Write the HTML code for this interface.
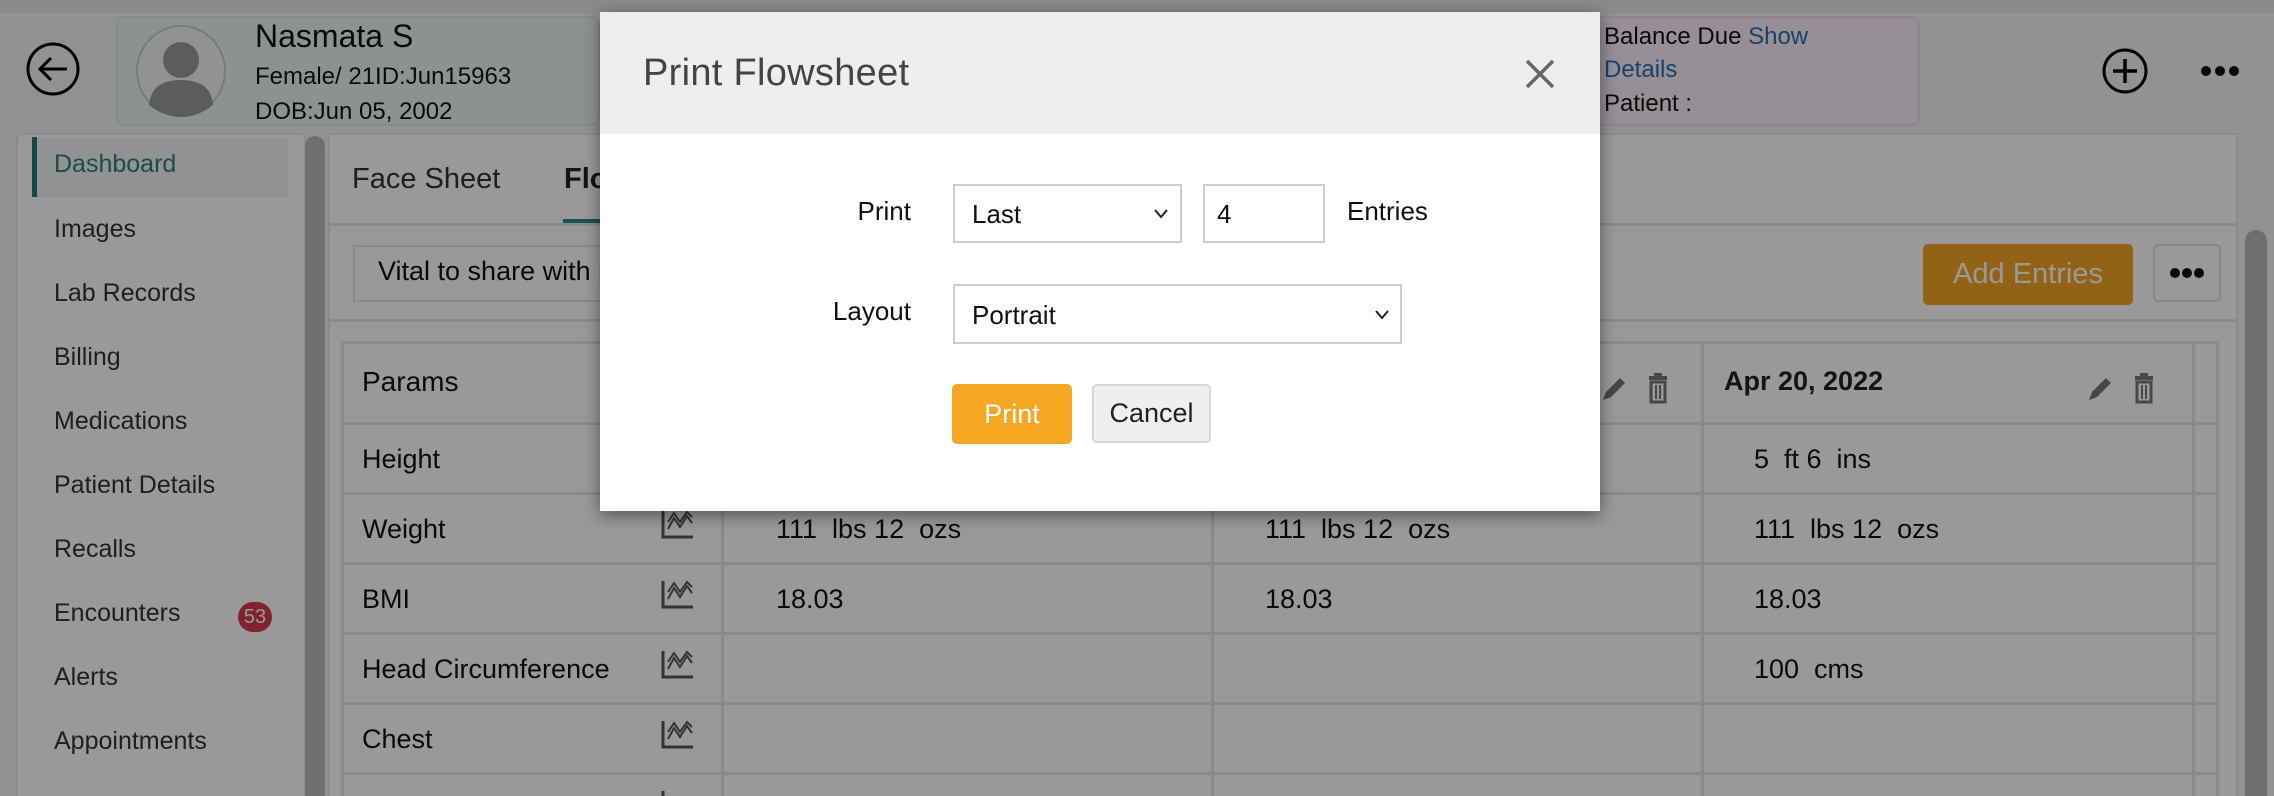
<!DOCTYPE html>
<html style="width:2274px;height:796px;overflow:hidden"><head><meta charset="utf-8"><style>
*{box-sizing:border-box;margin:0;padding:0}
body{width:2274px;height:796px;overflow:hidden;position:relative;background:#f3f3f3;font-family:"Liberation Sans",sans-serif;color:#222}
.a{position:absolute}
.t{position:absolute;white-space:nowrap}
.menu{position:absolute;left:54px;font-size:25px;color:#333}
.cell{position:absolute;font-size:27px;color:#111}
.hl{position:absolute;height:3px;background:#e6e6e6}
.vl{position:absolute;width:3px;background:#e6e6e6}
</style></head><body>
<div class="a" style="left:0;top:0;width:2274px;height:13px;background:#e8e8e8"></div>
<svg class="a" style="left:25px;top:41px" width="56" height="56" viewBox="0 0 56 56"><circle cx="28" cy="28" r="25" fill="none" stroke="#000" stroke-width="3"/><path d="M42 28H15M26 17L15 28L26 39" fill="none" stroke="#000" stroke-width="3"/></svg>
<div class="a" style="left:116px;top:16px;width:484px;height:110px;background:#eaf6ee;border:2px solid #dde8e0;border-radius:8px"></div>
<svg class="a" style="left:136px;top:25px" width="90" height="92" viewBox="0 0 90 92"><ellipse cx="45" cy="46" rx="44" ry="45" fill="#f4f4f4" stroke="#ccc" stroke-width="2"/><circle cx="45" cy="35" r="18" fill="#999"/><path d="M13 80Q15 55 45 55Q75 55 77 80Q62 92 45 92Q28 92 13 80Z" fill="#999"/></svg>
<div class="t" style="left:255px;top:18px;font-size:32px;color:#111">Nasmata S</div>
<div class="t" style="left:255px;top:63px;font-size:24px;color:#111">Female/ 21ID:Jun15963</div>
<div class="t" style="left:255px;top:98px;font-size:24px;color:#111">DOB:Jun 05, 2002</div>
<div class="a" style="left:1590px;top:16px;width:330px;height:110px;background:#fbeefb;border:2px solid #f0dcf0;border-radius:8px"></div>
<div class="t" style="left:1604px;top:23px;font-size:24px;color:#111">Balance Due <span style="color:#2a6fb0">Show</span></div>
<div class="t" style="left:1604px;top:56px;font-size:24px;color:#2a6fb0">Details</div>
<div class="t" style="left:1604px;top:90px;font-size:24px;color:#111">Patient :</div>
<svg class="a" style="left:2101px;top:47px" width="48" height="48" viewBox="0 0 48 48"><circle cx="24" cy="24" r="21" fill="none" stroke="#000" stroke-width="3"/><path d="M24 12V36M12 24H36" stroke="#000" stroke-width="3.5"/></svg>
<svg class="a" style="left:2198px;top:63px" width="44" height="16"><circle cx="8" cy="8" r="5" fill="#111"/><circle cx="22" cy="8" r="5" fill="#111"/><circle cx="36" cy="8" r="5" fill="#111"/></svg>
<div class="a" style="left:16px;top:133px;width:290px;height:663px;background:#fff;border:2px solid #e8e8e8;border-bottom:none;border-radius:6px 6px 0 0"></div>
<div class="a" style="left:32px;top:137px;width:256px;height:60px;background:#f3f3f3;border-left:5px solid #1f7a7a"></div>
<div class="menu" style="top:150px;color:#2a7f80">Dashboard</div>
<div class="menu" style="top:215px">Images</div>
<div class="menu" style="top:279px">Lab Records</div>
<div class="menu" style="top:343px">Billing</div>
<div class="menu" style="top:407px">Medications</div>
<div class="menu" style="top:471px">Patient Details</div>
<div class="menu" style="top:535px">Recalls</div>
<div class="menu" style="top:599px">Encounters</div>
<div class="a" style="left:238px;top:602px;width:34px;height:30px;border-radius:15px;background:#d8394a;color:#fff;font-size:20px;text-align:center;line-height:30px">53</div>
<div class="menu" style="top:663px">Alerts</div>
<div class="menu" style="top:727px">Appointments</div>
<div class="a" style="left:305px;top:136px;width:20px;height:660px;background:#b9b9b9;border-radius:10px 10px 0 0"></div>
<div class="a" style="left:328px;top:133px;width:1910px;height:663px;background:#fff;border:2px solid #e8e8e8;border-bottom:none"></div>
<div class="t" style="left:352px;top:163px;font-size:29px;color:#333">Face Sheet</div>
<div class="t" style="left:564px;top:163px;font-size:29px;color:#222;font-weight:bold">Flowsheet</div>
<div class="a" style="left:563px;top:219px;width:120px;height:4px;background:#2a8a8a"></div>
<div class="hl" style="left:330px;top:223px;width:1906px"></div>
<div class="a" style="left:353px;top:245px;width:400px;height:57px;border:2px solid #e6e6e6;background:#fff"></div>
<div class="t" style="left:378px;top:256px;font-size:27px;color:#111">Vital to share with patient</div>
<div class="hl" style="left:330px;top:319px;width:1906px"></div>
<div class="a" style="left:1923px;top:244px;width:210px;height:61px;background:#f5a623;border-radius:5px;color:#fff;font-size:29px;text-align:center;line-height:61px">Add Entries</div>
<div class="a" style="left:2153px;top:244px;width:68px;height:58px;border:2px solid #e2e2e2;border-radius:5px;background:#fff"></div>
<svg class="a" style="left:2167px;top:265px" width="40" height="16"><circle cx="8" cy="8" r="5" fill="#111"/><circle cx="20" cy="8" r="5" fill="#111"/><circle cx="32" cy="8" r="5" fill="#111"/></svg>
<div class="a" style="left:2245px;top:230px;width:22px;height:566px;background:#b7b7b7;border-radius:11px 11px 0 0"></div>
<div class="a" style="left:341px;top:341px;width:1878px;height:455px;border:3px solid #e6e6e6;border-bottom:none;background:#fff"></div>
<div class="hl" style="left:341px;top:422px;width:1878px"></div>
<div class="hl" style="left:341px;top:492px;width:1878px"></div>
<div class="hl" style="left:341px;top:562px;width:1878px"></div>
<div class="hl" style="left:341px;top:632px;width:1878px"></div>
<div class="hl" style="left:341px;top:702px;width:1878px"></div>
<div class="hl" style="left:341px;top:772px;width:1878px"></div>
<div class="vl" style="left:721px;top:341px;height:455px"></div>
<div class="vl" style="left:1211px;top:341px;height:455px"></div>
<div class="vl" style="left:1701px;top:341px;height:455px"></div>
<div class="vl" style="left:2192px;top:341px;height:455px"></div>
<div class="cell" style="left:362px;top:366px;font-size:28px">Params</div>
<div class="cell" style="left:1724px;top:366px;font-weight:bold;font-size:27px;color:#222">Apr 20, 2022</div>
<svg class="a" style="left:1600px;top:370px" width="70" height="36" viewBox="0 0 70 36"><path d="M3 30L6 22L20 8L25 13L11 27Z" fill="#777"/><rect x="49" y="6" width="18" height="4" fill="#777"/><rect x="54" y="3" width="8" height="3" fill="#777"/><path d="M51 12H65V32H51Z" fill="none" stroke="#777" stroke-width="3"/><path d="M56 15V29M60 15V29" stroke="#777" stroke-width="2"/></svg>
<svg class="a" style="left:2086px;top:370px" width="70" height="36" viewBox="0 0 70 36"><path d="M3 30L6 22L20 8L25 13L11 27Z" fill="#777"/><rect x="49" y="6" width="18" height="4" fill="#777"/><rect x="54" y="3" width="8" height="3" fill="#777"/><path d="M51 12H65V32H51Z" fill="none" stroke="#777" stroke-width="3"/><path d="M56 15V29M60 15V29" stroke="#777" stroke-width="2"/></svg>
<div class="cell" style="left:362px;top:444px">Height</div>
<div class="cell" style="left:362px;top:514px">Weight</div>
<div class="cell" style="left:362px;top:584px">BMI</div>
<div class="cell" style="left:362px;top:654px">Head Circumference</div>
<div class="cell" style="left:362px;top:724px">Chest</div>
<div class="cell" style="left:776px;top:514px">111&nbsp; lbs 12&nbsp; ozs</div>
<div class="cell" style="left:1265px;top:514px">111&nbsp; lbs 12&nbsp; ozs</div>
<div class="cell" style="left:1754px;top:514px">111&nbsp; lbs 12&nbsp; ozs</div>
<div class="cell" style="left:776px;top:584px">18.03</div>
<div class="cell" style="left:1265px;top:584px">18.03</div>
<div class="cell" style="left:1754px;top:584px">18.03</div>
<div class="cell" style="left:1754px;top:444px">5&nbsp; ft 6&nbsp; ins</div>
<div class="cell" style="left:1754px;top:654px">100&nbsp; cms</div>
<svg class="a" style="left:661px;top:509px" width="34" height="30" viewBox="0 0 34 30"><path d="M2 2V28H32" fill="none" stroke="#555" stroke-width="3"/><path d="M7 20L13 9L19 18L26 7L31 14M7 13L13 4L19 13L26 3L31 8" fill="none" stroke="#555" stroke-width="2"/></svg>
<svg class="a" style="left:661px;top:579px" width="34" height="30" viewBox="0 0 34 30"><path d="M2 2V28H32" fill="none" stroke="#555" stroke-width="3"/><path d="M7 20L13 9L19 18L26 7L31 14M7 13L13 4L19 13L26 3L31 8" fill="none" stroke="#555" stroke-width="2"/></svg>
<svg class="a" style="left:661px;top:649px" width="34" height="30" viewBox="0 0 34 30"><path d="M2 2V28H32" fill="none" stroke="#555" stroke-width="3"/><path d="M7 20L13 9L19 18L26 7L31 14M7 13L13 4L19 13L26 3L31 8" fill="none" stroke="#555" stroke-width="2"/></svg>
<svg class="a" style="left:661px;top:719px" width="34" height="30" viewBox="0 0 34 30"><path d="M2 2V28H32" fill="none" stroke="#555" stroke-width="3"/><path d="M7 20L13 9L19 18L26 7L31 14M7 13L13 4L19 13L26 3L31 8" fill="none" stroke="#555" stroke-width="2"/></svg>
<svg class="a" style="left:661px;top:789px" width="34" height="7" viewBox="0 0 34 7"><path d="M2 2V7" fill="none" stroke="#555" stroke-width="3"/></svg>
<div class="a" style="left:0;top:0;width:2274px;height:796px;background:rgba(0,0,0,0.4)"></div>
<div class="a" style="left:600px;top:12px;width:1000px;height:499px;background:#fff;box-shadow:0 4px 16px rgba(0,0,0,0.45)">
  <div class="a" style="left:0;top:0;width:1000px;height:122px;background:#eeeeee"></div>
  <div class="t" style="left:43px;top:40px;font-size:38px;color:#444;letter-spacing:0.3px">Print Flowsheet</div>
  <svg class="a" style="left:924px;top:46px" width="32" height="32" viewBox="0 0 32 32"><path d="M3 3L29 29M29 3L3 29" stroke="#666" stroke-width="3.5"/></svg>
  <div class="t" style="left:246px;top:184px;font-size:26px;color:#111;text-align:right;width:65px">Print</div>
  <div class="a" style="left:353px;top:172px;width:229px;height:59px;border:2px solid #ccc;background:#fff"></div>
  <div class="t" style="left:372px;top:187px;font-size:26px;color:#111">Last</div>
  <svg class="a" style="left:553px;top:196px" width="16" height="12"><path d="M2 2L8 9L14 2" fill="none" stroke="#222" stroke-width="2"/></svg>
  <div class="a" style="left:603px;top:172px;width:122px;height:59px;border:2px solid #ccc;background:#fff"></div>
  <div class="t" style="left:617px;top:187px;font-size:26px;color:#111">4</div>
  <div class="t" style="left:747px;top:184px;font-size:26px;color:#111">Entries</div>
  <div class="t" style="left:200px;top:284px;font-size:26px;color:#111;text-align:right;width:111px">Layout</div>
  <div class="a" style="left:353px;top:272px;width:449px;height:60px;border:2px solid #ccc;background:#fff"></div>
  <div class="t" style="left:372px;top:288px;font-size:26px;color:#111">Portrait</div>
  <svg class="a" style="left:774px;top:297px" width="16" height="12"><path d="M2 2L8 9L14 2" fill="none" stroke="#222" stroke-width="2"/></svg>
  <div class="a" style="left:352px;top:372px;width:120px;height:60px;background:#f5a623;border-radius:5px;color:#fff;font-size:27px;text-align:center;line-height:60px">Print</div>
  <div class="a" style="left:492px;top:372px;width:119px;height:59px;background:#efefef;border:2px solid #d6d6d6;border-radius:5px;color:#222;font-size:27px;text-align:center;line-height:55px">Cancel</div>
</div>
</body></html>
